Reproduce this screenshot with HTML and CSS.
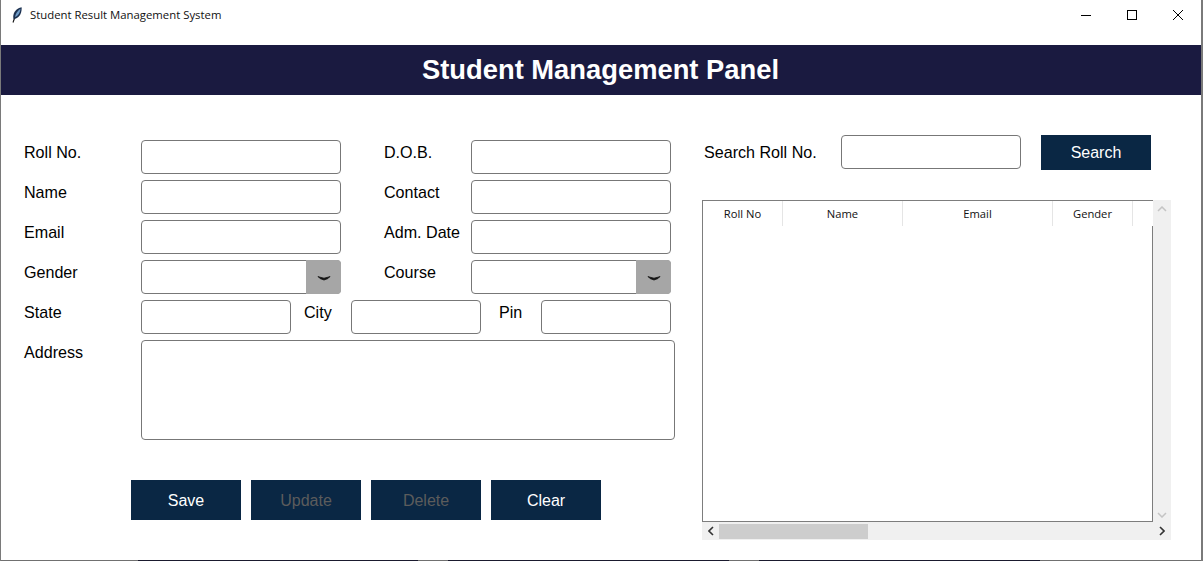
FILE: index.html
```html
<!DOCTYPE html>
<html lang="en">

<head>
    <meta charset="UTF-8">
    <meta name="viewport" content="width=device-width, initial-scale=1.0">
    <title>Student Result Management System</title>
    <link rel="stylesheet" href="styles.css">
</head>

<body>
    <div class="window">
        <div class="titlebar">
            <svg class="feather" width="10" height="16" viewBox="0 0 10 16">
                <path d="M1 15.5 L2.6 11" stroke="#111" stroke-width="1.1" fill="none" />
                <path d="M1.6 12 C0 7.5 3.5 1 9.6 0.2 C10.2 6 7 12 1.6 12 Z" fill="#1c3150" />
                <path d="M3 10 C3.4 7 5.5 4 8.4 1.8 C8.4 5 6.4 9 3 10 Z" fill="#6f9cc8" />
            </svg>
            <span class="app-title">Student Result Management System</span>
            <div class="win-controls">
                <svg width="12" height="12" viewBox="0 0 12 12">
                    <path d="M1 6.5 H11" stroke="#000" stroke-width="1" />
                </svg>
                <svg width="12" height="12" viewBox="0 0 12 12">
                    <rect x="1.5" y="1.5" width="9" height="9" fill="none" stroke="#000" stroke-width="1" />
                </svg>
                <svg width="12" height="12" viewBox="0 0 12 12">
                    <path d="M1 1 L11 11 M11 1 L1 11" stroke="#000" stroke-width="1" />
                </svg>
            </div>
        </div>

        <h1 class="banner">Student Management Panel</h1>

        <div class="main">
            <form class="form-panel">
                <div class="row">
                    <label class="label-first">Roll No.</label>
                    <input class="field" type="text">
                    <label class="label-second">D.O.B.</label>
                    <input class="field" type="text">
                </div>
                <div class="row">
                    <label class="label-first">Name</label>
                    <input class="field" type="text">
                    <label class="label-second">Contact</label>
                    <input class="field" type="text">
                </div>
                <div class="row">
                    <label class="label-first">Email</label>
                    <input class="field" type="text">
                    <label class="label-second">Adm. Date</label>
                    <input class="field" type="text">
                </div>
                <div class="row">
                    <label class="label-first">Gender</label>
                    <div class="combo">
                        <div class="combo-arrow">
                            <svg width="14" height="8" viewBox="0 0 14 8">
                                <path d="M1 1.5 L3 3.5 L7 5 L11 3.5 L13 1.5 L11 2.2 L7 3.2 L3 2.2 Z" fill="#111" stroke="#111" stroke-width="0.8" />
                            </svg>
                        </div>
                    </div>
                    <label class="label-second">Course</label>
                    <div class="combo">
                        <div class="combo-arrow">
                            <svg width="14" height="8" viewBox="0 0 14 8">
                                <path d="M1 1.5 L3 3.5 L7 5 L11 3.5 L13 1.5 L11 2.2 L7 3.2 L3 2.2 Z" fill="#111" stroke="#111" stroke-width="0.8" />
                            </svg>
                        </div>
                    </div>
                </div>
                <div class="row">
                    <label class="label-first">State</label>
                    <input class="field field-state" type="text">
                    <label class="label-city">City</label>
                    <input class="field field-small" type="text">
                    <label class="label-pin">Pin</label>
                    <input class="field field-small" type="text">
                </div>
                <div class="row">
                    <label class="label-first">Address</label>
                    <textarea class="field field-address"></textarea>
                </div>
                <div class="buttons">
                    <button class="btn" type="button">Save</button>
                    <button class="btn btn-off" type="button">Update</button>
                    <button class="btn btn-off" type="button">Delete</button>
                    <button class="btn" type="button">Clear</button>
                </div>
            </form>

            <div class="list-panel">
                <div class="search-row">
                    <label class="label-search">Search Roll No.</label>
                    <input class="field field-search" type="text">
                    <button class="btn btn-search" type="button">Search</button>
                </div>
                <div class="table-box">
                    <div class="tree">
                        <div class="tree-head">
                            <div class="col col-roll">Roll No</div>
                            <div class="col col-name">Name</div>
                            <div class="col col-email">Email</div>
                            <div class="col col-gender">Gender</div>
                            <div class="col col-rest"></div>
                        </div>
                        <div class="tree-body"></div>
                    </div>
                    <div class="vscroll">
                        <svg width="10" height="6" viewBox="0 0 10 6">
                            <path d="M1 5 L5 1 L9 5" stroke="#c4c4c4" stroke-width="1.5" fill="none" />
                        </svg>
                        <svg width="10" height="6" viewBox="0 0 10 6">
                            <path d="M1 1 L5 5 L9 1" stroke="#c4c4c4" stroke-width="1.5" fill="none" />
                        </svg>
                    </div>
                    <div class="hscroll">
                        <svg class="arrow-left" width="6" height="10" viewBox="0 0 6 10">
                            <path d="M5 1 L1 5 L5 9" stroke="#333" stroke-width="1.6" fill="none" />
                        </svg>
                        <div class="hthumb"></div>
                        <svg class="arrow-right" width="6" height="10" viewBox="0 0 6 10">
                            <path d="M1 1 L5 5 L1 9" stroke="#333" stroke-width="1.6" fill="none" />
                        </svg>
                    </div>
                </div>
            </div>
        </div>

        <div class="bottom-edge"></div>
    </div>
</body>

</html>
```

FILE: styles.css
```css
* {
    box-sizing: border-box;
}

body {
    margin: 0;
    font-family: "Liberation Sans", Arial, sans-serif;
    background-color: #fff;
    color: #000;
    overflow: hidden;
}

.window {
    display: flex;
    flex-direction: column;
    width: 1203px;
    height: 561px;
    background-color: #fff;
    border-left: 1px solid #7a7a7a;
    border-right: 2px solid #7a7a7a;
}

.titlebar {
    display: flex;
    flex: none;
    align-items: center;
    height: 45px;
    padding: 0 0 16px 11px;
}

.feather {
    margin-right: 8px;
}

.app-title {
    font-family: "Open Sans", "Noto Sans", sans-serif;
    font-size: 11.35px;
    color: #111;
}

.win-controls {
    display: flex;
    gap: 34px;
    margin-left: auto;
    margin-right: 17px;
}

.banner {
    flex: none;
    margin: 0;
    height: 50px;
    line-height: 50px;
    padding-right: 1px;
    background-color: #1a1a40;
    color: #fff;
    font-size: 27.35px;
    font-weight: bold;
    text-align: center;
}

.main {
    display: flex;
    flex: 1;
}

.bottom-edge {
    flex: none;
    height: 1px;
    background: linear-gradient(to right,
            #707070 137px, #1a1a2e 137px, #1a1a2e 417px,
            #707070 417px, #707070 447px, #1a1a2e 447px, #1a1a2e 728px,
            #707070 728px, #707070 758px, #1a1a2e 758px, #1a1a2e 1039px,
            #707070 1039px);
}

.form-panel {
    width: 701px;
    padding: 45px 0 0 23px;
}

.row {
    display: flex;
    align-items: flex-start;
    margin-bottom: 6px;
}

label {
    font-size: 16.1px;
    line-height: 18px;
    padding-top: 3px;
}

.label-first {
    width: 117px;
}

.label-second {
    width: 87px;
    margin-left: 43px;
}

.label-city {
    width: 47px;
    margin-left: 13px;
}

.label-pin {
    width: 42px;
    margin-left: 18px;
}

.label-search {
    width: 137px;
}

.field {
    display: block;
    width: 200px;
    height: 34px;
    padding: 0 6px;
    background-color: #fff;
    border: 1px solid #777;
    border-radius: 4px;
    font-size: 16px;
    resize: none;
}

.field-state {
    width: 150px;
}

.field-small {
    width: 130px;
}

.field-address {
    width: 534px;
    height: 100px;
}

.field-search {
    width: 180px;
}

.combo {
    display: flex;
    justify-content: flex-end;
    width: 200px;
    height: 34px;
    background-color: #fff;
    border: 1px solid #777;
    border-radius: 4px;
}

.combo-arrow {
    display: flex;
    align-items: center;
    justify-content: center;
    width: 35px;
    margin: -1px -1px -1px 0;
    padding-top: 3px;
    background-color: #a6a6a6;
    border-radius: 0 4px 4px 0;
}

.buttons {
    display: flex;
    gap: 10px;
    margin: 40px 0 0 107px;
}

.btn {
    width: 110px;
    height: 40px;
    padding: 2px 0 0;
    background-color: #0a2744;
    color: #fff;
    border: none;
    font-family: "Liberation Sans", Arial, sans-serif;
    font-size: 16px;
}

.btn-off {
    color: #5c5c5c;
}

.list-panel {
    padding-top: 40px;
}

.search-row {
    display: flex;
    align-items: flex-start;
    padding-left: 2px;
    height: 65px;
}

label.label-search {
    padding-top: 8px;
}

.btn-search {
    height: 35px;
    margin-left: 20px;
    padding: 0;
}

.table-box {
    display: grid;
    grid-template-columns: 451px 18px;
    grid-template-rows: 322px 18px;
    width: 469px;
    background-color: #f0f0f0;
}

.tree {
    display: flex;
    flex-direction: column;
    background-color: #fff;
    border: 1px solid #7d7d7d;
    border-right: none;
    overflow: hidden;
}

.tree-head {
    display: flex;
    flex: none;
    height: 25px;
    font-family: "Open Sans", "Noto Sans", sans-serif;
    font-size: 11.2px;
    color: #111;
}

.tree-body {
    flex: 1;
    border-right: 1px solid #7d7d7d;
}

.col {
    flex: none;
    line-height: 25px;
    text-align: center;
    border-right: 1px solid #e5e5e5;
}

.col-roll {
    width: 80px;
}

.col-name {
    width: 120px;
}

.col-email {
    width: 150px;
}

.col-gender {
    width: 80px;
}

.col-rest {
    border-right: none;
    flex: 1;
}

.vscroll {
    display: flex;
    flex-direction: column;
    align-items: center;
    justify-content: space-between;
    padding: 6px 0 4px;
}

.hscroll {
    grid-column: 1 / 3;
    display: flex;
    align-items: center;
    padding: 0 0 0 6px;
}

.hthumb {
    width: 149px;
    height: 15px;
    margin-left: 5px;
    background-color: #cdcdcd;
}

.arrow-right {
    margin-left: auto;
    margin-right: 6px;
}
```
